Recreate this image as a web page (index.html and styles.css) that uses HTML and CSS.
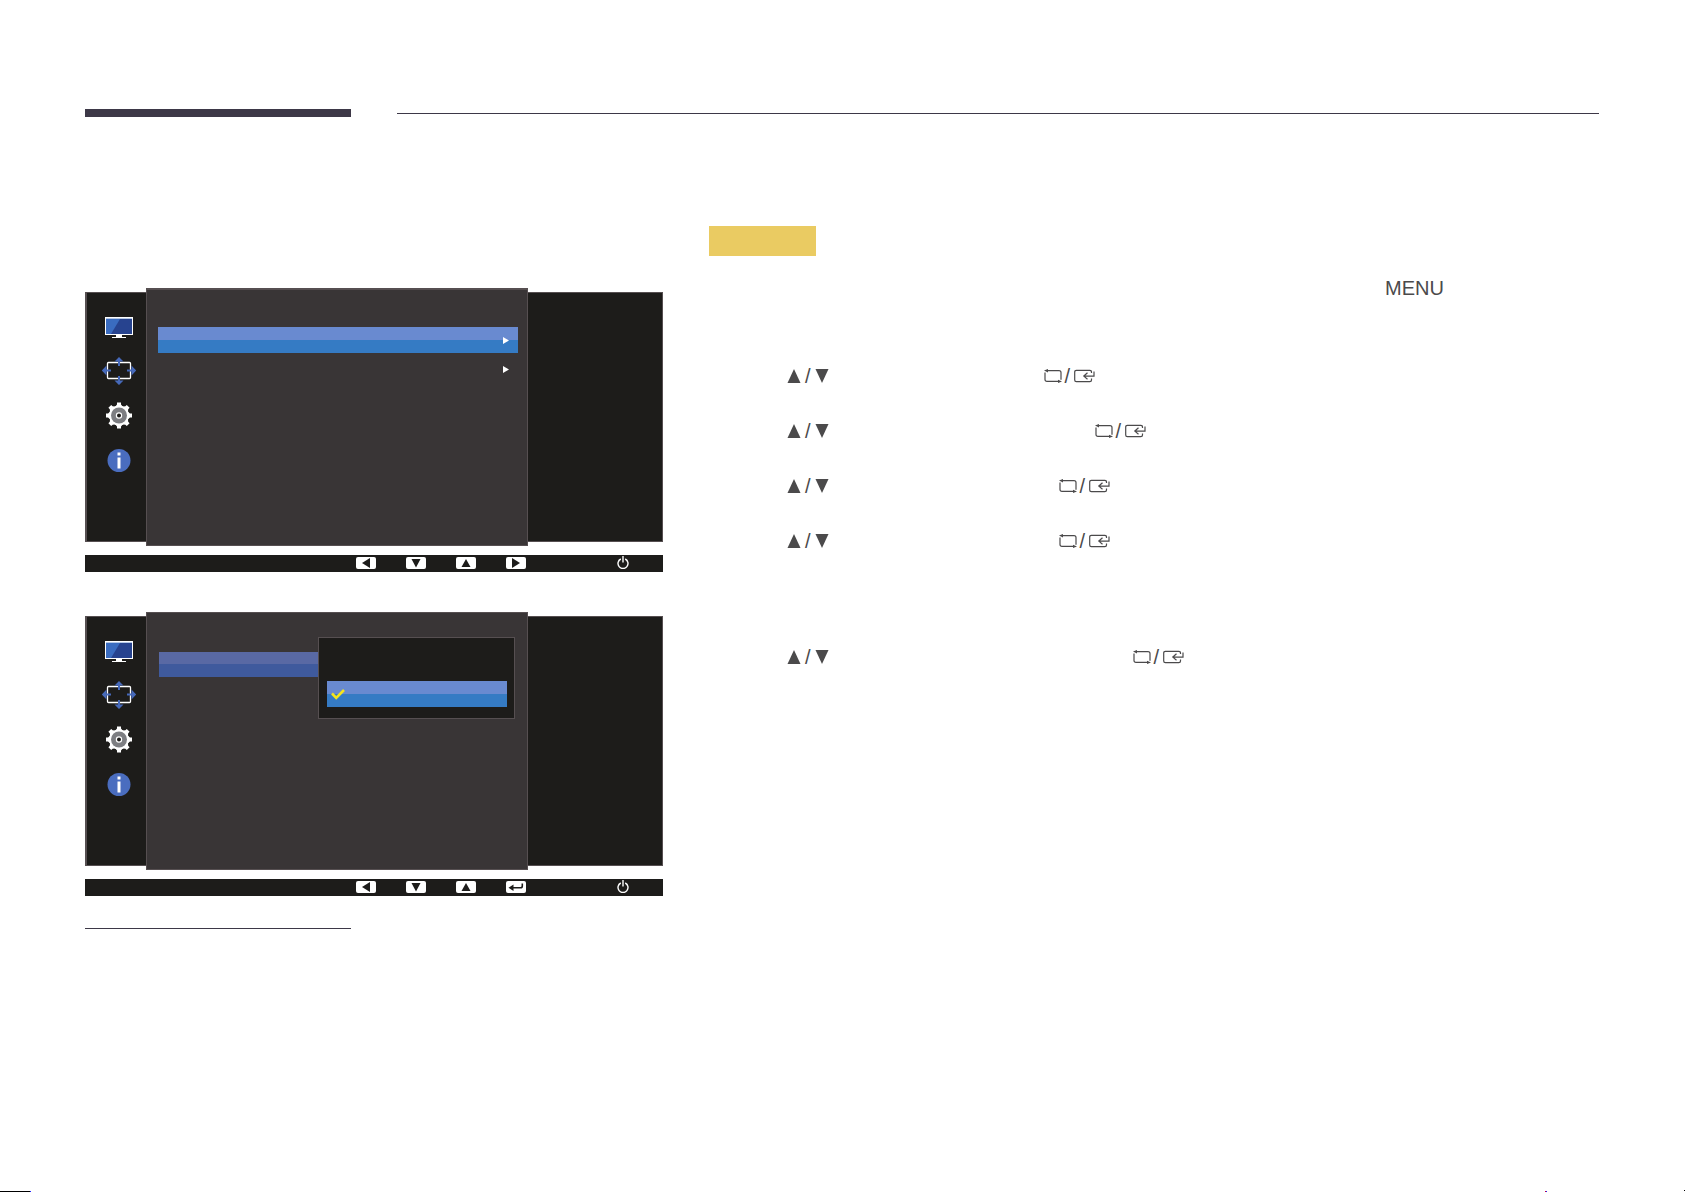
FILE: index.html
```html
<!DOCTYPE html>
<html lang="en">
<head>
<meta charset="utf-8">
<meta name="viewport" content="width=device-width, initial-scale=1">
<title>Manual</title>
<link rel="stylesheet" href="styles.css">
</head>
<body>
<svg class="sprite" aria-hidden="true">
  <symbol id="monitor" viewBox="0 0 36 44">
    <path fill="#fff" d="M4 11h28v18H22v1h3v2H11v-2h3v-1H4z"/>
    <path fill="#1d1c1a" d="M11 29h4v2h-4zM21 29h4v2h-4z"/>
    <path fill="#b5c8e6" d="M5 12h26v2H5z"/>
    <path fill="#27438f" d="M5 13h26v15H5z"/>
    <path fill="#3a6cc0" d="M5 13h14l-9 15H5z"/>
  </symbol>
  <symbol id="position" viewBox="0 0 36 44">
    <rect x="6.500" y="12.500" width="23" height="16" rx="1" fill="none" stroke="#fff" stroke-width="1.300"/>
    <path fill="#4669ba" d="M18 7l4.500 4.500H19V16h-2v-4.500h-3.500zM18 35l4.500-4.500H19V26h-2v4.500h-3.500zM.800 20.500l4.700-5V19.500H10v2H5.500v4zM35.200 20.500l-4.700-5V19.500H26v2h4.500v4z"/>
  </symbol>
  <symbol id="gear" viewBox="0 0 36 44">
    <g fill="#fff">
      <circle cx="18" cy="21.500" r="10"/>
      <g id="teeth"><path d="M13.500 13.500l2.500-3V8.500h4v2l2.500 3zM13.500 29.500l2.500 3v2h4v-2l2.500-3zM10 17l-3 2.500H5v4h2l3 2.500zM26 17l3 2.500h2v4h-2l-3 2.500z"/></g>
      <use href="#teeth" transform="rotate(45 18 21.500)"/>
    </g>
    <circle cx="18" cy="21.500" r="8" fill="#7d7e82"/>
    <circle cx="18" cy="21.500" r="2.600" fill="#1d1c1a" stroke="#fff" stroke-width="1.200"/>
  </symbol>
  <symbol id="info" viewBox="0 0 36 44">
    <circle cx="18" cy="22.500" r="11.500" fill="#4a6dbf"/>
    <path fill="#fff" d="M16.500 14.500h3v3h-3zM16.500 19.500h3v11h-3z"/>
  </symbol>
  <symbol id="k-left" viewBox="0 0 20 12"><path d="M6 6l8-5v10z"/></symbol>
  <symbol id="k-right" viewBox="0 0 20 12"><path d="M14 6L6 1v10z"/></symbol>
  <symbol id="k-down" viewBox="0 0 20 12"><path d="M10 10.500L5.500 2h9z"/></symbol>
  <symbol id="k-up" viewBox="0 0 20 12"><path d="M10 2l4.500 8h-9z"/></symbol>
  <symbol id="k-enter" viewBox="0 0 20 12"><path d="M2.500 6.700l5-3.200v6.400z"/><path d="M6 6.700h8.500q1.800 0 1.800-1.800V2.500" fill="none" stroke="#1d1c1a" stroke-width="1.600"/></symbol>
  <symbol id="power" viewBox="0 0 12 13"><path fill="none" stroke="#fff" stroke-width="1.400" d="M3.800 3a5 5 0 1 0 4.400 0M6 0v6.500"/></symbol>
  <symbol id="chevron" viewBox="0 0 6 7"><path fill="#fff" d="M0 0l6 3.500L0 7z"/></symbol>
  <symbol id="up" viewBox="0 0 14 14"><path d="M7 0l6.500 14H.500z"/></symbol>
  <symbol id="down" viewBox="0 0 14 14"><path d="M7 14L.500 0h13z"/></symbol>
  <symbol id="loop" viewBox="0 0 18 14">
    <path fill="none" stroke="#4b4a4b" stroke-width="1.200" d="M3 1.600h12q2 0 2 2v7.200M15 12.400H3q-2 0-2-2V3.500"/>
    <path d="M0 1.600l4-1.600v3.600zM18 12.400l-4-1.700v3.300z"/>
  </symbol>
  <symbol id="source" viewBox="-1 0 22 14">
    <path fill="none" stroke="#4b4a4b" stroke-width="1.200" d="M17.500 4V3q0-1.700-1.700-1.700H2.400Q.700 1.300.700 3v8q0 1.700 1.700 1.700h13.400q1.700 0 1.700-1.700v-1.500M20 2.500v4.600H9.800M13.500 3.800L9.800 7.100l3.700 3.200"/>
  </symbol>
</svg>

<div class="page">
  <header class="header">
    <div class="bar"></div>
    <div class="rule"></div>
  </header>

  <main class="columns">
    <section class="screens">
      <div class="screen">
        <div class="osd">
          <nav class="side">
            <svg><use href="#monitor"/></svg>
            <svg><use href="#position"/></svg>
            <svg><use href="#gear"/></svg>
            <svg><use href="#info"/></svg>
          </nav>
          <div class="menu menu-main">
            <button class="row row-active" aria-label="Open first item"><svg><use href="#chevron"/></svg></button>
            <button class="row" aria-label="Open second item"><svg><use href="#chevron"/></svg></button>
          </div>
          <div class="help"></div>
        </div>
        <div class="keys">
          <button class="key" aria-label="Back"><svg><use href="#k-left"/></svg></button>
          <button class="key" aria-label="Down"><svg><use href="#k-down"/></svg></button>
          <button class="key" aria-label="Up"><svg><use href="#k-up"/></svg></button>
          <button class="key" aria-label="Right"><svg><use href="#k-right"/></svg></button>
          <button class="power" aria-label="Power"><svg><use href="#power"/></svg></button>
        </div>
      </div>

      <div class="screen">
        <div class="osd">
          <nav class="side">
            <svg><use href="#monitor"/></svg>
            <svg><use href="#position"/></svg>
            <svg><use href="#gear"/></svg>
            <svg><use href="#info"/></svg>
          </nav>
          <div class="menu menu-sub">
            <button class="row row-open" aria-label="Opened item"></button>
            <div class="popup">
              <button class="row row-active option" aria-label="Selected option">
                <svg class="check" viewBox="0 0 14 11"><path fill="none" stroke="#f4e51c" stroke-width="2.600" d="M1 4.500l4.200 4.300L13 1"/></svg>
              </button>
            </div>
          </div>
          <div class="help"></div>
        </div>
        <div class="keys">
          <button class="key" aria-label="Back"><svg><use href="#k-left"/></svg></button>
          <button class="key" aria-label="Down"><svg><use href="#k-down"/></svg></button>
          <button class="key" aria-label="Up"><svg><use href="#k-up"/></svg></button>
          <button class="key" aria-label="Enter"><svg><use href="#k-enter"/></svg></button>
          <button class="power" aria-label="Power"><svg><use href="#power"/></svg></button>
        </div>
      </div>
      <div class="footnote-rule"></div>
    </section>

    <section class="guide">
      <div class="tag"></div>
      <p class="menu-word">MENU</p>
      <div class="steps">
        <div class="step step-1">
          <span class="arrows"><svg><use href="#up"/></svg>/<svg><use href="#down"/></svg></span>
          <span class="confirm"><svg class="loop"><use href="#loop"/></svg>/<svg class="source"><use href="#source"/></svg></span>
        </div>
        <div class="step step-2">
          <span class="arrows"><svg><use href="#up"/></svg>/<svg><use href="#down"/></svg></span>
          <span class="confirm"><svg class="loop"><use href="#loop"/></svg>/<svg class="source"><use href="#source"/></svg></span>
        </div>
        <div class="step step-3">
          <span class="arrows"><svg><use href="#up"/></svg>/<svg><use href="#down"/></svg></span>
          <span class="confirm"><svg class="loop"><use href="#loop"/></svg>/<svg class="source"><use href="#source"/></svg></span>
        </div>
        <div class="step step-3">
          <span class="arrows"><svg><use href="#up"/></svg>/<svg><use href="#down"/></svg></span>
          <span class="confirm"><svg class="loop"><use href="#loop"/></svg>/<svg class="source"><use href="#source"/></svg></span>
        </div>
        <div class="step step-last">
          <span class="arrows"><svg><use href="#up"/></svg>/<svg><use href="#down"/></svg></span>
          <span class="confirm"><svg class="loop"><use href="#loop"/></svg>/<svg class="source"><use href="#source"/></svg></span>
        </div>
      </div>
    </section>
  </main>

  <footer class="edge">
    <i class="edge-black"></i><i class="edge-blue"></i>
    <span class="edge-mid"><i class="edge-red"></i><i class="edge-blue"></i></span>
    <i class="edge-dot"></i>
  </footer>
</div>
</body>
</html>
```

FILE: styles.css
```css
* { box-sizing: border-box; }
body {
  margin: 0;
  background: #fff;
  color: #4b4a4b;
  font: 20px/24px "Liberation Sans", Arial, sans-serif;
}
svg { display: block; flex: none; }
button { margin: 0; padding: 0; border: 0; background: none; }
.sprite { position: absolute; width: 0; height: 0; }

.page {
  display: flex;
  flex-direction: column;
  min-height: 100vh;
}

.header {
  display: grid;
  grid-template-columns: 266px 1fr;
  gap: 46px;
  padding: 109px 86px 0 85px;
}
.bar { height: 8px; background: #3d3847; }
.rule { height: 1px; margin-top: 4px; background: #3d3847; }

.columns {
  display: grid;
  grid-template-columns: minmax(0, 578px) 1fr;
  gap: 46px;
  padding: 109px 86px 0 85px;
}

.screens { padding-top: 62px; }
.screen { margin-bottom: 40px; }
.screen:nth-child(2) { margin-bottom: 32px; }
.osd {
  display: grid;
  grid-template-columns: 61px 1fr 135px;
  height: 258px;
}
.side, .help {
  margin: 4px 0;
  background: #1d1c1a;
  border: 1px solid #564f51;
}
.side {
  display: flex;
  flex-direction: column;
  align-items: center;
  padding: 13px 0 0 5px;
  border-width: 1px 0 1px 2px;
}
.side svg { width: 36px; height: 44px; }
.help { border-left: 0; }

.menu {
  position: relative;
  display: flex;
  flex-direction: column;
  gap: 3px;
  background: #393536;
  border: 1px solid #564f51;
}
.menu-main { padding: 37px 9px 0 11px; border-top-width: 2px; }
.menu-sub { padding: 39px 24px 0 12px; }
.row {
  display: flex;
  align-items: center;
  justify-content: flex-end;
  width: 100%;
  height: 26px;
  padding-right: 9px;
}
.row svg { width: 6px; height: 7px; }
.row-active { background: linear-gradient(#698ad0 50%, #357bc4 50%); }
.row-open { height: 25px; background: linear-gradient(#5969a4 48%, #3f5a9d 48%); }

.popup {
  position: absolute;
  top: 24px;
  right: 12px;
  width: 197px;
  height: 82px;
  padding: 43px 7px 0 8px;
  background: #1d1c1a;
  border: 1px solid #564f51;
}
.option { justify-content: flex-start; padding: 0 4px; }
.option .check { width: 14px; height: 11px; }

.keys {
  display: flex;
  align-items: center;
  justify-content: flex-end;
  gap: 30px;
  height: 17px;
  margin-top: 9px;
  padding: 0 34px 2px 0;
  background: #1d1c1a;
}
.key {
  width: 20px;
  height: 12px;
  border-radius: 2px;
  background: #fff;
}
.key svg { width: 20px; height: 12px; fill: #1d1c1a; }
.power { width: 12px; height: 13px; margin-left: 61px; }
.power svg { width: 12px; height: 13px; }
.footnote-rule { width: 266px; height: 1px; background: #3d3847; }

.tag { width: 107px; height: 30px; background: #eacb62; }
.menu-word {
  margin: 20px 0 64px;
  padding-right: 155px;
  text-align: right;
}
.steps { display: flex; flex-direction: column; gap: 31px; padding-left: 78px; }
.step { display: flex; height: 24px; }
.step-1 { gap: 215px; }
.step-2 { gap: 266px; }
.step-3 { gap: 230px; }
.step-last { gap: 304px; margin-top: 61px; }
.arrows, .confirm { display: flex; align-items: center; fill: #4b4a4b; }
.arrows { gap: 4px; }
.arrows svg { width: 14px; height: 14px; }
.confirm { gap: 3px; }
.loop { width: 18px; height: 14px; }
.source { width: 22px; height: 14px; }

.edge { display: flex; align-items: flex-end; height: 2px; margin-top: auto; }
.edge i { height: 1px; }
.edge-black { width: 30px; background: #000; }
.edge-blue { width: 1px; background: #22f; }
.edge-red { width: 1px; background: #c03; }
.edge-mid { display: flex; margin-left: auto; margin-right: 137px; }
.edge .edge-dot { width: 1px; align-self: flex-start; background: #000; }
```
